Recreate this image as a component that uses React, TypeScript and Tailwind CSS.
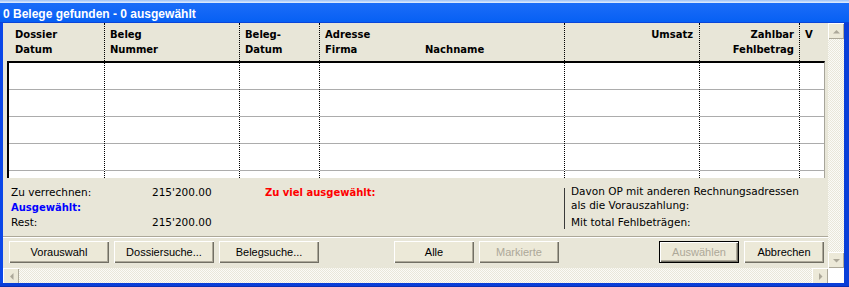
import React from 'react';

type Dir = 'up' | 'down' | 'left' | 'right';

const arrowPts: Record<Dir, string> = {
  up: '4,9.5 11,9.5 7.5,6',
  down: '4,6 11,6 7.5,9.5',
  left: '9.5,4 9.5,11 6,7.5',
  right: '6,4 6,11 9.5,7.5',
};

function ScrollBtn({ dir }: { dir: Dir }) {
  return (
    <div className="flex h-[16px] w-[16px] shrink-0 items-center justify-center bg-[#ece9d8] shadow-[inset_1px_1px_0_#ffffff,inset_-1px_-1px_0_#aca899]">
      <svg width="15" height="15" viewBox="0 0 15 15">
        <polygon points={arrowPts[dir]} fill="#aca899" />
      </svg>
    </div>
  );
}

function Btn({
  label,
  wide,
  disabled,
  primary,
}: {
  label: string;
  wide?: boolean;
  disabled?: boolean;
  primary?: boolean;
}) {
  return (
    <div
      className={
        (wide ? 'w-[100px] ' : 'w-[80px] ') +
        (primary ? 'border border-black ' : '') +
        (disabled ? 'text-[#aca899] ' : 'text-black ') +
        'flex h-[22px] shrink-0 items-center justify-center bg-[#ece9d8] text-[11px] shadow-[inset_1px_1px_0_#ffffff,inset_-1px_-1px_0_#716f64,inset_-2px_-2px_0_#aca899]'
      }
    >
      {label}
    </div>
  );
}

const gridCols = [
  'w-[95px]',
  'w-[135px] border-l border-dotted border-black',
  'w-[80px] border-l border-dotted border-black',
  'w-[245px] border-l border-dotted border-black',
  'w-[135px] border-l border-dotted border-black',
  'w-[100px] border-l border-dotted border-black',
  'w-[25px] border-l border-dotted border-black',
];

const track =
  'bg-[repeating-conic-gradient(#e9e7da_0%_25%,#fbfbf7_0%_50%)] bg-[length:2px_2px]';

export default function App() {
  return (
    <div className="flex h-[287px] w-[849px] flex-col overflow-hidden bg-[#0b47e8] font-['Liberation_Sans',sans-serif]">
      <div className="h-[3px] bg-gradient-to-b from-[#9cc0f6] to-[#e6effd]" />
      <div className="h-[20px] border-b border-[#0a45d8] bg-gradient-to-b from-[#1a6cf8] to-[#0660f4] pl-[3px] pt-[5px] text-[12px] font-bold leading-[12px] text-white">
        0 Belege gefunden - 0 ausgewählt
      </div>

      <div className="flex flex-1 border-r-[5px] border-l-[3px] border-r-[#0a3fd8] border-l-[#0b47e8]">
        {/* main pane */}
        <div className="flex w-[825px] flex-col bg-[#e8e6d8] font-['DejaVu_Sans',sans-serif] text-black">
          {/* header */}
          <div className="ml-[4px] flex h-[38px] text-[10px] font-bold leading-[15px]">
            <div className="w-[97px] pl-[8px] pt-[4px]">
              <div>Dossier</div>
              <div>Datum</div>
            </div>
            <div className="w-[135px] border-l border-dotted border-black pl-[5px] pt-[4px]">
              <div>Beleg</div>
              <div>Nummer</div>
            </div>
            <div className="w-[80px] border-l border-dotted border-black pl-[5px] pt-[4px]">
              <div>Beleg-</div>
              <div>Datum</div>
            </div>
            <div className="w-[245px] border-l border-dotted border-black pl-[5px] pt-[4px]">
              <div>Adresse</div>
              <div className="flex">
                <span className="w-[100px]">Firma</span>
                <span>Nachname</span>
              </div>
            </div>
            <div className="w-[135px] border-l border-dotted border-black pr-[6px] pt-[4px] text-right">
              <div>Umsatz</div>
            </div>
            <div className="w-[100px] border-l border-dotted border-black pr-[5px] pt-[4px] text-right">
              <div>Zahlbar</div>
              <div>Fehlbetrag</div>
            </div>
            <div className="w-[25px] border-l border-dotted border-black pl-[5px] pt-[4px]">
              <div>V</div>
            </div>
          </div>

          {/* grid */}
          <div className="ml-[4px] flex h-[117px] w-[818px] overflow-hidden border-t-2 border-r border-l-2 border-t-black border-r-[#a7a59a] border-l-black bg-white">
            {gridCols.map((c, i) => (
              <div key={i} className={c + ' h-full'}>
                {[0, 1, 2, 3, 4].map((r) => (
                  <div key={r} className="h-[27px] border-b border-[#acacac]" />
                ))}
              </div>
            ))}
          </div>

          {/* summary */}
          <div className="flex h-[58px] text-[10.5px] leading-[15px]">
            <div className="grid w-[561px] grid-cols-[141px_113px_1fr] content-start pl-[8px] pt-[7px]">
              <div>Zu verrechnen:</div>
              <div>215'200.00</div>
              <div className="text-[10px] font-bold text-[#ff0000]">Zu viel ausgewählt:</div>
              <div className="text-[10px] font-bold text-[#0000ff]">Ausgewählt:</div>
              <div />
              <div />
              <div>Rest:</div>
              <div>215'200.00</div>
              <div />
            </div>
            <div className="flex flex-1">
              <div className="mt-[10px] h-[41px] w-px bg-[#3a3a3a]" />
              <div className="whitespace-nowrap pl-[6px] pt-[6px] leading-[14px]">
                <div>Davon OP mit anderen Rechnungsadressen</div>
                <div>als die Vorauszahlung:</div>
                <div className="mt-[3px]">Mit total Fehlbeträgen:</div>
              </div>
            </div>
          </div>

          <div className="h-px bg-[#aca899]" />
          <div className="h-px bg-white" />

          {/* buttons */}
          <div className="flex h-[30px] pl-[6px] pt-[3px] font-['Liberation_Sans',sans-serif]">
            <div className="flex gap-[5px]">
              <Btn label="Vorauswahl" wide />
              <Btn label="Dossiersuche..." wide />
              <Btn label="Belegsuche..." wide />
            </div>
            <div className="ml-[75px] flex gap-[5px]">
              <Btn label="Alle" />
              <Btn label="Markierte" disabled />
            </div>
            <div className="ml-[100px] flex gap-[5px]">
              <Btn label="Auswählen" disabled primary />
              <Btn label="Abbrechen" />
            </div>
          </div>
        </div>

        {/* vertical scrollbar */}
        <div className={'flex w-[16px] flex-col ' + track}>
          <ScrollBtn dir="up" />
          <div className="flex-1" />
          <ScrollBtn dir="down" />
        </div>
      </div>

      {/* horizontal scrollbar */}
      <div className="flex h-[15px] border-r-[5px] border-l-[3px] border-r-[#0a3fd8] border-l-[#0b47e8]">
        <div className={'flex w-[825px] ' + track}>
          <div className="h-[15px] overflow-hidden">
            <ScrollBtn dir="left" />
          </div>
          <div className="flex-1" />
          <div className="h-[15px] overflow-hidden">
            <ScrollBtn dir="right" />
          </div>
        </div>
        <div className="w-[16px] bg-white" />
      </div>
      <div className="h-[4px] border-b border-[#0a2fb0] bg-[#0a3fd8]" />
    </div>
  );
}
